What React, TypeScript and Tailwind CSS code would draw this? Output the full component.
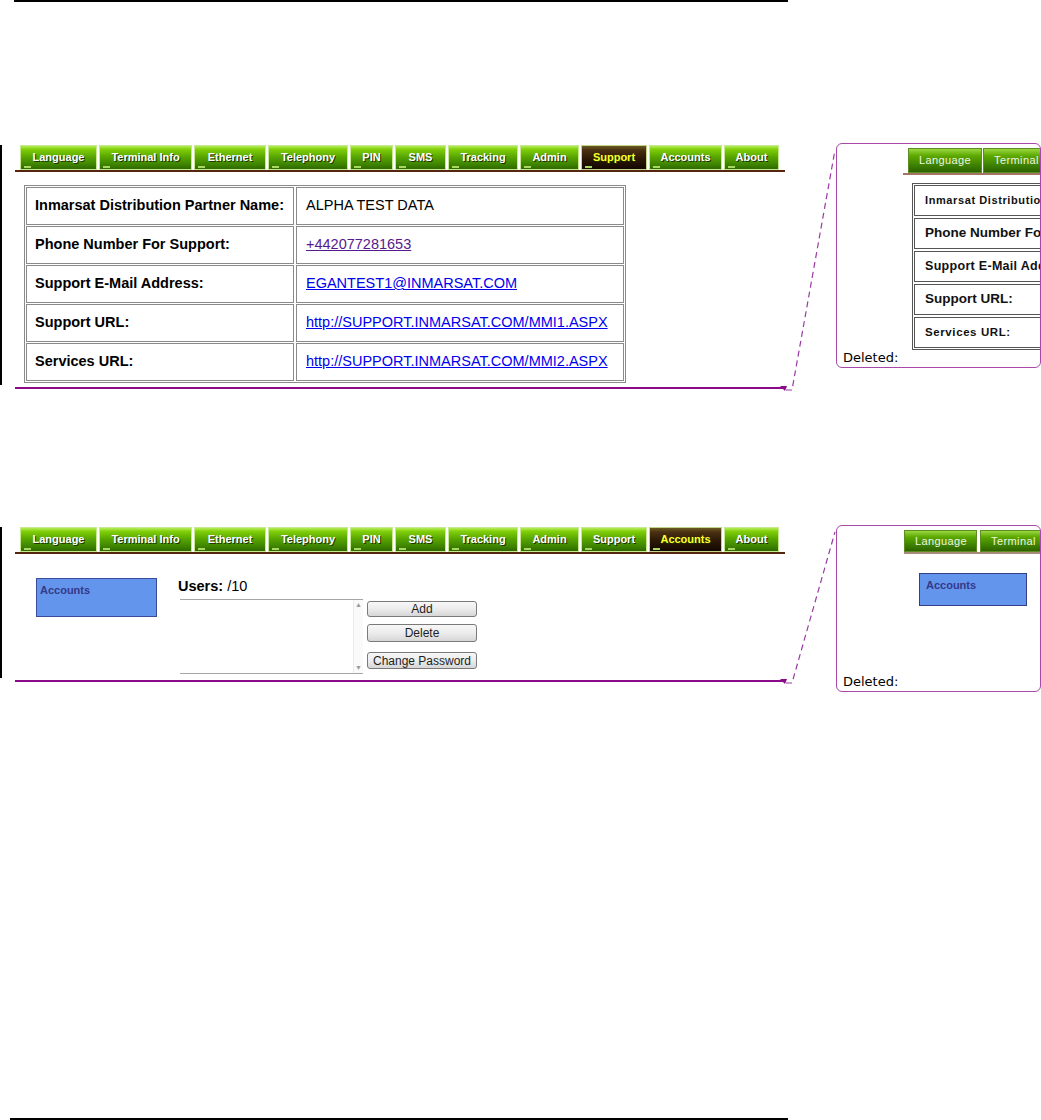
import React from 'react'

const TABS = [
  { label: 'Language', w: 'w-[77px]' },
  { label: 'Terminal Info', w: 'w-[93px]' },
  { label: 'Ethernet', w: 'w-[72px]' },
  { label: 'Telephony', w: 'w-[80px]' },
  { label: 'PIN', w: 'w-[43px]' },
  { label: 'SMS', w: 'w-[51px]' },
  { label: 'Tracking', w: 'w-[70px]' },
  { label: 'Admin', w: 'w-[59px]' },
  { label: 'Support', w: 'w-[66px]' },
  { label: 'Accounts', w: 'w-[73px]' },
  { label: 'About', w: 'w-[55px]' },
]

const SUPPORT_ROWS = [
  { label: 'Inmarsat Distribution Partner Name:', value: 'ALPHA TEST DATA', kind: 'text' },
  { label: 'Phone Number For Support:', value: '+442077281653', kind: 'visited' },
  { label: 'Support E-Mail Address:', value: 'EGANTEST1@INMARSAT.COM', kind: 'link' },
  { label: 'Support URL:', value: 'http://SUPPORT.INMARSAT.COM/MMI1.ASPX', kind: 'link' },
  { label: 'Services URL:', value: 'http://SUPPORT.INMARSAT.COM/MMI2.ASPX', kind: 'link' },
]

// the small labels in the margin balloon were rendered at odd sizes
const BALLOON_ROWS = [
  { label: 'Inmarsat Distribution Partner Name:', cls: 'text-[11px] tracking-[0.6px]' },
  { label: 'Phone Number For Support:', cls: 'text-[13.5px]' },
  { label: 'Support E-Mail Address:', cls: 'text-[12.5px] tracking-[0.3px]' },
  { label: 'Support URL:', cls: 'text-[13.5px]' },
  { label: 'Services URL:', cls: 'text-[11.5px] tracking-[0.6px]' },
]

const greenTab =
  'bg-[linear-gradient(to_bottom,#b4ec5a_0%,#82d00a_14%,#5aa800_45%,#3e8400_80%,#2e6800_100%)] border-[#c6e890] text-white'
const activeTab =
  'bg-[linear-gradient(to_bottom,#6a5a22_0%,#4a3010_18%,#2c1806_55%,#140800_100%)] border-[#c2d48a] text-[#ffff2a]'

function Tab({ label, w, active }: { label: string; w: string; active?: boolean }) {
  return (
    <div
      className={`relative ${w} h-[25px] shrink-0 flex items-center justify-center border text-[11px] font-bold [text-shadow:1px_1px_0_#1c3400] ${
        active ? activeTab : greenTab
      }`}
    >
      {label}
      <span className="absolute left-[3px] bottom-[1px] w-[7px] h-[2px] bg-[#a8d862]" />
    </div>
  )
}

function TabBar({ active }: { active: string }) {
  return (
    <div className="ml-[13px] w-[770px]">
      <div className="flex gap-[2px] pl-[5px]">
        {TABS.map((t) => (
          <Tab key={t.label} label={t.label} w={t.w} active={t.label === active} />
        ))}
      </div>
      <div className="h-[2px] bg-[#55260f]" />
    </div>
  )
}

function PurpleRule() {
  return <div className="mt-[2px] ml-[15px] w-[770px] h-[2px] bg-[#8a0a8a]" />
}

function SupportTable() {
  return (
    <div className="ml-[22px] mt-[13px] w-[602px] border border-[#8a8a8a] p-[1px] flex flex-col gap-[1px]">
      {SUPPORT_ROWS.map((r) => (
        <div key={r.label} className="flex gap-[2px] h-[38px]">
          <div className="w-[268px] border border-[#8a8a8a] flex items-center pl-[8px] text-[14.5px] font-bold text-black whitespace-nowrap">
            {r.label}
          </div>
          <div className="flex-1 border border-[#8a8a8a] flex items-center pl-[9px] text-[14.5px] whitespace-nowrap">
            {r.kind === 'text' && <span className="text-black">{r.value}</span>}
            {r.kind === 'visited' && <a className="text-[#551a8b] underline">{r.value}</a>}
            {r.kind === 'link' && <a className="text-[#0000ee] underline">{r.value}</a>}
          </div>
        </div>
      ))}
    </div>
  )
}

function MiniTab({ label, w, h }: { label: string; w: string; h: string }) {
  return (
    <div
      className={`${w} ${h} shrink-0 flex items-center pl-[10px] border border-[#5d8c22] bg-[linear-gradient(to_bottom,#9ad840_0%,#5ca800_30%,#3a7c00_75%,#2e6200_100%)] text-[11px] tracking-[0.4px] text-[#eef6e4] whitespace-nowrap`}
    >
      {label}
    </div>
  )
}

function Deleted() {
  return (
    <div className="mt-auto pl-[6px] pb-[1px] font-['DejaVu_Sans',sans-serif] text-[13px] leading-[16px] text-black">
      Deleted:
    </div>
  )
}

function SupportBalloon() {
  return (
    <div className="w-[205px] h-[225px] border border-[#a848a8] rounded-[6px] overflow-hidden flex flex-col">
      <div className="ml-[66px] mt-[4px]">
        <div className="flex gap-[1px] pl-[5px]">
          <MiniTab label="Language" w="w-[74px]" h="h-[25px]" />
          <MiniTab label="Terminal Info" w="w-[90px]" h="h-[25px]" />
        </div>
        <div className="h-[2px] w-[200px] bg-[#a27468]" />
      </div>
      <div className="ml-[75px] mt-[8px] w-[200px] border border-[#555] p-[1px] flex flex-col gap-[2px]">
        {BALLOON_ROWS.map((r) => (
          <div
            key={r.label}
            className={`h-[31px] border border-[#555] flex items-center pl-[10px] font-bold text-[#111] whitespace-nowrap ${r.cls}`}
          >
            {r.label}
          </div>
        ))}
      </div>
      <Deleted />
    </div>
  )
}

function AccountsBalloon() {
  return (
    <div className="w-[205px] h-[167px] border border-[#a848a8] rounded-[6px] overflow-hidden flex flex-col">
      <div className="ml-[67px] mt-[4px]">
        <div className="flex gap-[3px]">
          <MiniTab label="Language" w="w-[73px]" h="h-[22px]" />
          <MiniTab label="Terminal Info" w="w-[90px]" h="h-[22px]" />
        </div>
        <div className="h-[2px] w-[200px] bg-[#a88a78]" />
      </div>
      <div className="ml-[82px] mt-[19px] w-[108px] h-[33px] border border-[#334088] bg-[#6495ed] pl-[6px] pt-[3px] text-[11px] font-bold text-[#34398a]">
        Accounts
      </div>
      <Deleted />
    </div>
  )
}

function ListBox() {
  return (
    <div className="ml-[2px] w-[183px] h-[75px] border-y border-[#a6a6a6] flex">
      <div className="flex-1" />
      <div className="w-[10px] border-l border-[#ececec] bg-[#fafafa] flex flex-col justify-between items-center text-[7px] leading-[10px] text-[#9a9a9a]">
        <span>▲</span>
        <span>▼</span>
      </div>
    </div>
  )
}

function GreyButton({ label, h, mt }: { label: string; h: string; mt: string }) {
  return (
    <div
      className={`${h} ${mt} w-[110px] border border-[#7a7a7a] rounded-[3px] bg-[linear-gradient(to_bottom,#f7f7f7_0%,#ececec_50%,#d6d6d6_100%)] flex items-center justify-center text-[12px] text-[#1e1e1e] leading-none`}
    >
      {label}
    </div>
  )
}

function AccountsFigure() {
  return (
    <div className="flex items-start">
      <div className="ml-[34px] mt-[24px] w-[121px] h-[39px] border border-[#3a4b9c] bg-[#6495ed] pl-[3px] pt-[3px] text-[11px] font-bold text-[#34398a]">
        Accounts
      </div>
      <div className="ml-[21px] mt-[23px]">
        <div className="text-[14.5px] leading-[18px] text-black">
          <span className="font-bold">Users:</span> /10
        </div>
        <div className="mt-[4px] flex items-start">
          <ListBox />
          <div className="ml-[4px] flex flex-col">
            <GreyButton label="Add" h="h-[16px]" mt="mt-[2px]" />
            <GreyButton label="Delete" h="h-[18px]" mt="mt-[7px]" />
            <GreyButton label="Change Password" h="h-[17px]" mt="mt-[10px]" />
          </div>
        </div>
      </div>
    </div>
  )
}

export default function App() {
  return (
    <div className="relative w-[1041px] h-[1120px] overflow-hidden bg-white font-['Liberation_Sans',Arial,sans-serif] flex flex-col">
      {/* top page rule */}
      <div className="ml-[14px] w-[774px] h-[2px] bg-black" />

      {/* figure: Support tab */}
      <div className="mt-[141px] flex items-start">
        <div className="w-[836px] pt-[2px]">
          <div className="border-l-2 border-black pb-[2px]">
            <TabBar active="Support" />
            <SupportTable />
          </div>
          <PurpleRule />
        </div>
        <SupportBalloon />
      </div>

      {/* figure: Accounts tab */}
      <div className="mt-[136px] flex items-start">
        <div className="w-[836px] pt-[2px]">
          <div className="border-l-2 border-black pb-[4px]">
            <TabBar active="Accounts" />
            <AccountsFigure />
          </div>
          <PurpleRule />
        </div>
        <AccountsBalloon />
      </div>

      {/* bottom page rule */}
      <div className="mt-auto ml-[10px] w-[778px] h-[2px] bg-black" />

      {/* balloon connectors */}
      <svg className="absolute inset-0 pointer-events-none" width="1041" height="1120">
        <polygon points="780,386 787,386 785,391" fill="#8a0a8a" />
        <polyline points="786,390 792,390 835,150" fill="none" stroke="#9a3aa4" strokeWidth="1.2" strokeDasharray="6 4" />
        <polygon points="780,679 787,679 785,684" fill="#8a0a8a" />
        <polyline points="786,683 792,683 835,532" fill="none" stroke="#9a3aa4" strokeWidth="1.2" strokeDasharray="6 4" />
      </svg>
    </div>
  )
}
